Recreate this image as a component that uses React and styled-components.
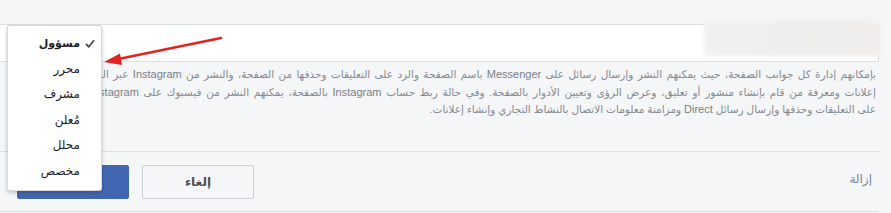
import React from "react";
import styled, { createGlobalStyle } from "styled-components";

const Global = createGlobalStyle`
  html, body { margin: 0; padding: 0; background: #f5f6f7; }
  body { width: 891px; height: 213px; overflow: hidden; font-family: "Liberation Sans", "DejaVu Sans", sans-serif; }
`;

const Page = styled.div`
  position: relative;
  width: 891px;
  height: 213px;
  overflow: hidden;
  background: #f5f6f7;
`;

const Panel = styled.div`
  direction: rtl;
  margin: 0 12px 0 -2px;
  padding-top: 24px;
`;

const Field = styled.div`
  height: 36px;
  background: #fff;
  border: 1px solid #dddfe2;
  position: relative;
`;

const Redacted = styled.div`
  position: absolute;
  left: 704px;
  top: 21px;
  width: 176px;
  height: 35px;
  background: linear-gradient(90deg, #f1f1f1 0%, #eeeeee 50%, #f1eeec 100%);
  filter: blur(2px);
`;

const Description = styled.div`
  margin-top: 4px;
  padding-right: 3px;
  font-size: 10.5px;
  line-height: 17.5px;
  color: #868a91;
`;

const Line = styled.div`
  white-space: nowrap;
  overflow: hidden;
  text-align: right;
  word-spacing: ${p => p.$spacing || 0}px;
`;

const Latin = styled.span`
  font-size: 11px;
  color: #7a7f87;
`;

const Divider = styled.div`
  margin-top: 32px;
  height: 1px;
  background: #dddfe2;
`;

const Footer = styled.div`
  height: 59px;
  display: flex;
  align-items: flex-start;
  justify-content: space-between;
  border-bottom: 1px solid #dddfe2;
  padding-left: 19px;
`;

const RemoveLink = styled.span`
  margin-top: 20px;
  margin-right: 7px;
  font-size: 12px;
  color: #7183a8;
`;

const Buttons = styled.div`
  display: flex;
  gap: 13px;
  margin-top: 13px;
`;

const Button = styled.button`
  width: 112px;
  height: 34px;
  border-radius: 2px;
  font-family: inherit;
  font-size: 12px;
  font-weight: bold;
  border: 1px solid ${p => (p.$primary ? "#4267b2" : "#ccd0d5")};
  background: ${p => (p.$primary ? "#4267b2" : "#f5f6f7")};
  color: ${p => (p.$primary ? "#fff" : "#4b4f56")};
  padding: 0;
`;

const Menu = styled.ul`
  position: absolute;
  left: 7px;
  top: 25px;
  width: 93px;
  margin: 0;
  padding: 5px 0;
  list-style: none;
  background: #fff;
  border: 1px solid rgba(0, 0, 0, 0.15);
  border-radius: 3px;
  box-shadow: 0 2px 4px rgba(0, 0, 0, 0.2);
  direction: rtl;
`;

const Item = styled.li`
  position: relative;
  height: 25.6px;
  line-height: 25.6px;
  padding-right: 21px;
  font-size: ${p => (p.$selected ? "11px" : "12px")};
  color: #1d2129;
  font-weight: ${p => (p.$selected ? "bold" : "normal")};
`;

const Check = styled.svg`
  position: absolute;
  right: 6px;
  top: 8px;
`;

const Arrow = styled.svg`
  position: absolute;
  left: 0;
  top: 0;
  pointer-events: none;
`;

const roles = ["مسؤول", "محرر", "مشرف", "مُعلن", "محلل", "مخصص"];

export default function App() {
  return (
    <Page>
      <Global />
      <Panel>
        <Field />
        <Description>
          <Line $spacing={1.4}>
            بإمكانهم إدارة كل جوانب الصفحة، حيث يمكنهم النشر وإرسال رسائل على <Latin>Messenger</Latin> باسم الصفحة والرد على التعليقات وحذفها من الصفحة، والنشر من <Latin>Instagram</Latin> عبر الصفحة، وإنشاء
          </Line>
          <Line $spacing={1.8}>
            إعلانات ومعرفة من قام بإنشاء منشور أو تعليق، وعرض الرؤى وتعيين الأدوار بالصفحة. وفي حالة ربط حساب <Latin>Instagram</Latin> بالصفحة، يمكنهم النشر من فيسبوك على <Latin>Instagram</Latin> والرد
          </Line>
          <Line>
            على التعليقات وحذفها وإرسال رسائل <Latin>Direct</Latin> ومزامنة معلومات الاتصال بالنشاط التجاري وإنشاء إعلانات.
          </Line>
        </Description>
        <Divider />
        <Footer>
          <RemoveLink>إزالة</RemoveLink>
          <Buttons>
            <Button>إلغاء</Button>
            <Button $primary>حفظ</Button>
          </Buttons>
        </Footer>
      </Panel>
      <Redacted />
      <Menu>
        {roles.map((r, i) => (
          <Item key={r} $selected={i === 0}>
            {i === 0 && (
              <Check width="10" height="9" viewBox="0 0 10 9">
                <path d="M1 5 L3.8 7.8 L9 1.2" fill="none" stroke="#4b4f56" strokeWidth="1.8" />
              </Check>
            )}
            {r}
          </Item>
        ))}
      </Menu>
      <Arrow width="891" height="213" viewBox="0 0 891 213">
        <line x1="221" y1="38" x2="116" y2="59.5" stroke="#e32222" strokeWidth="2.5" strokeLinecap="round" />
        <polygon points="104,62 120,53.5 122,65" fill="#e32222" />
      </Arrow>
    </Page>
  );
}
